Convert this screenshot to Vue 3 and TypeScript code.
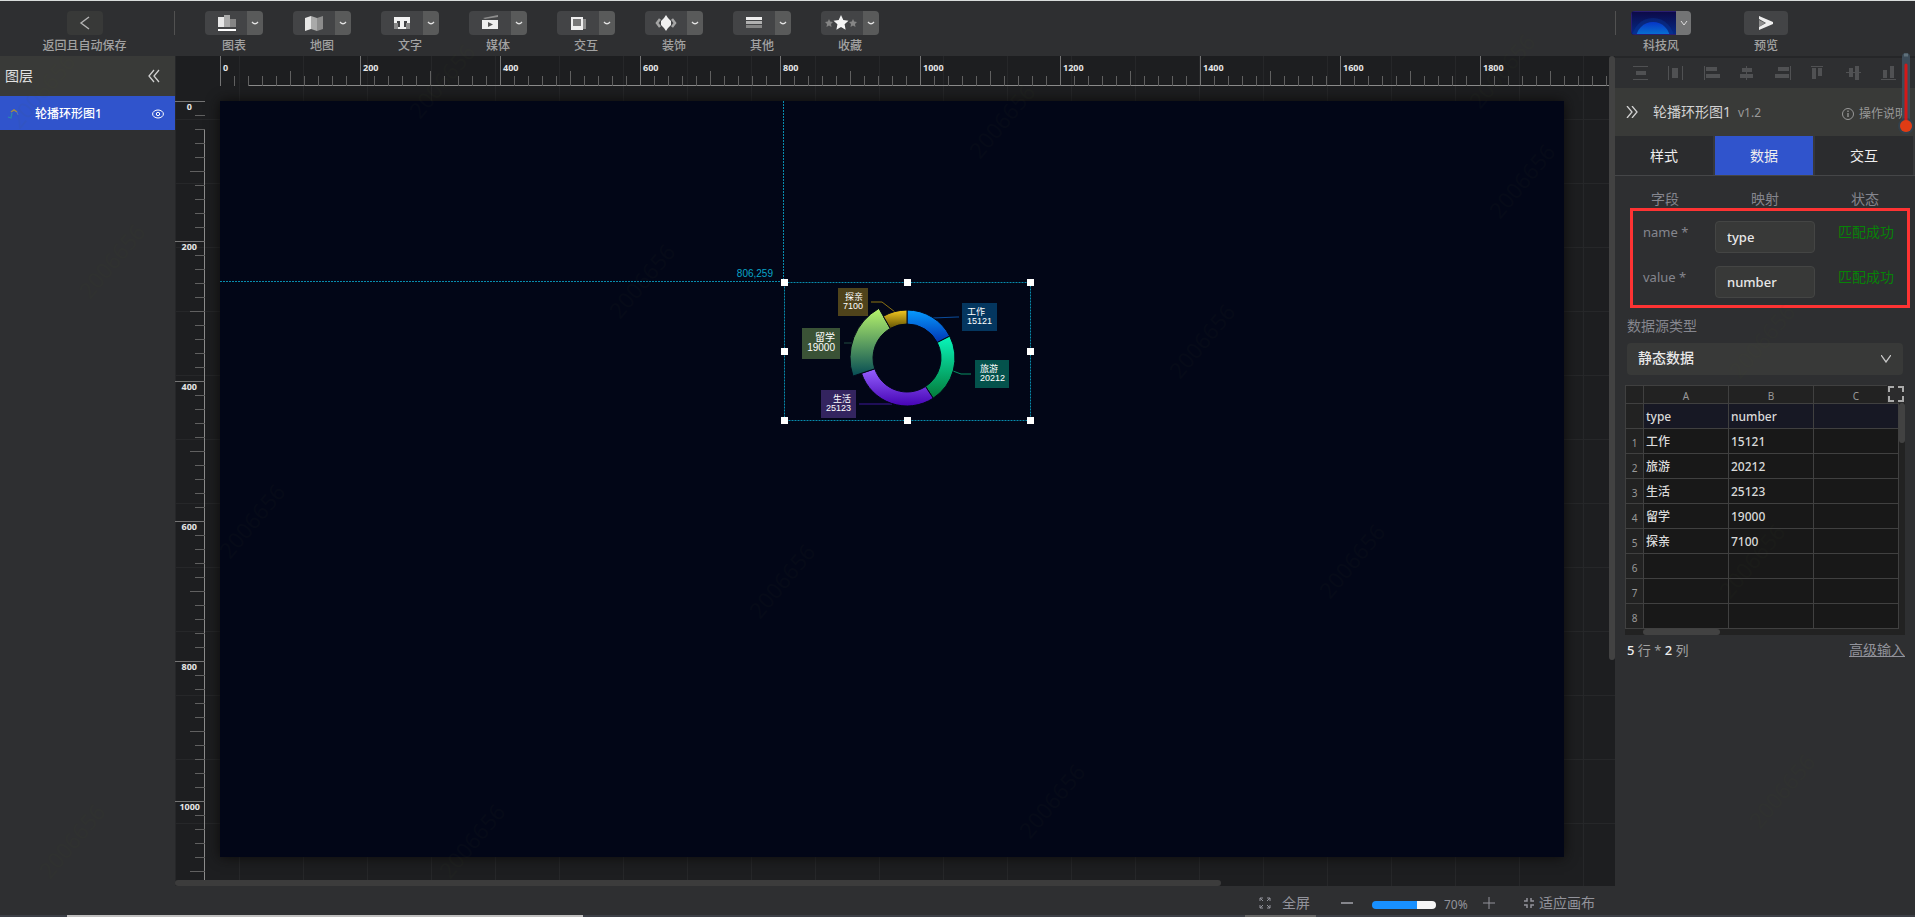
<script setup lang="ts">
import { ref } from 'vue'

interface Tick { pos: number; size: number; label: string }
interface Slice { name: string; value: number; path: string; fill: string; leader: string; stroke: string; box: number[]; bg: string; font: number; anchor: 'start' | 'end' }

const tools = ['图表', '地图', '文字', '媒体', '交互', '装饰', '其他', '收藏']

function buildTicks(count: number, full: number): Tick[] {
  return Array.from({ length: count }, (_, i) => ({
    pos: 45 + i * 14,
    size: i % 10 === 0 ? full : i % 5 === 0 ? 15 : 10,
    label: i % 10 === 0 ? String(i * 20) : '',
  }))
}
const hTicks = buildTicks(100, 30)
const vTicks = buildTicks(56, 30)

const cx = 687
const cy = 257
function point(r: number, deg: number): string {
  const a = ((deg - 90) * Math.PI) / 180
  return `${(cx + r * Math.cos(a)).toFixed(2)} ${(cy + r * Math.sin(a)).toFixed(2)}`
}
function arc(from: number, to: number, outer: number): string {
  const inner = 34
  return `M${point(outer, from)}A${outer} ${outer} 0 0 1 ${point(outer, to)}L${point(inner, to)}A${inner} ${inner} 0 0 0 ${point(inner, from)}Z`
}

const raw = [
  { name: '工作', value: 15121, fill: 'gBlue', leader: 'M713 217L737 216H739', stroke: '#0b4c9c', box: [742, 202, 35, 28], bg: '#04365f', font: 9, anchor: 'start' },
  { name: '旅游', value: 20212, fill: 'gGreen', leader: 'M733 270L741 273H751', stroke: '#088f62', box: [755, 259, 34, 28], bg: '#04524c', font: 9, anchor: 'start' },
  { name: '生活', value: 25123, fill: 'gPurple', leader: 'M639 303H672', stroke: '#3c169a', box: [601, 289, 35, 28], bg: '#33245f', font: 9, anchor: 'end' },
  { name: '留学', value: 19000, fill: 'gLime', leader: 'M624 242H634', stroke: '#204a40', box: [582, 227, 38, 31], bg: '#3a5236', font: 10, anchor: 'end' },
  { name: '探亲', value: 7100, fill: 'gYellow', leader: 'M651 201H662L675 211', stroke: '#8c7212', box: [618, 187, 30, 28], bg: '#4f431b', font: 9, anchor: 'end' },
] as const

const total = raw.reduce((s, d) => s + d.value, 0)
let angle = 0
const slices: Slice[] = raw.map((d) => {
  const from = angle
  angle += (d.value / total) * 360
  return { ...d, box: [...d.box], path: arc(from, angle, d.name === '留学' ? 57 : 48) }
})

const handles = [
  [564, 181], [687, 181], [810, 181], [564, 250], [810, 250], [564, 319], [687, 319], [810, 319],
]
const marks = [
  [20, 130], [420, 120], [980, 160], [1480, 110], [90, 300], [620, 320], [1180, 380], [1500, 220], [230, 560], [760, 620],
  [1330, 600], [1740, 380], [1730, 600], [50, 880], [450, 880], [1030, 840], [1760, 830],
]

const tabs = ['样式', '数据', '交互']
const activeTab = ref('数据')
const fields = ref([
  { key: 'name', map: 'type' },
  { key: 'value', map: 'number' },
])
const source = ref('静态数据')
const zoom = ref(70)
const sheet = Array.from({ length: 8 }, (_, i) => [raw[i]?.name ?? '', raw[i] ? String(raw[i].value) : '', ''])
</script>

<template>
  <div class="app">
    <header class="top">
      <div class="back">
        <button class="btn back-btn" aria-label="返回且自动保存">
          <svg width="12" height="16" viewBox="0 0 12 16"><path d="M10 2L2 8l8 6" fill="none" stroke="#b4b4b4" stroke-width="1.4" /></svg>
        </button>
        <span>返回且自动保存</span>
      </div>
      <nav class="tools">
        <div v-for="t in tools" :key="t" class="tool">
          <div class="split">
            <button class="main" :aria-label="t">
              <svg width="34" height="18" viewBox="0 0 34 18">
                <g v-if="t === '图表'"><path d="M9 3h6v10H9z" fill="#e8e8e8" /><path d="M15 1h6v12h-6z" fill="#a9a9a9" /><path d="M21 5h6v8h-6z" fill="#858585" /><path d="M9 15h18v2H9z" fill="#fff" /></g>
                <g v-else-if="t === '地图'"><path d="M8 4l6-2v13l-6 2z" fill="#e6e6e6" /><path d="M14 2l6 2v13l-6-2z" fill="#a9a9a9" /><path d="M20 4l6-2v13l-6 2z" fill="#8c8c8c" /></g>
                <g v-else-if="t === '文字'"><path d="M9 9h4v6H9zM21 9h4v6h-4z" fill="#8a8a8a" /><path d="M9 3h16v6h-3V7h-3v6h2v2h-8v-2h2V7h-3v2H9z" fill="#f2f2f2" /></g>
                <g v-else-if="t === '媒体'"><path d="M9 6h16v9H9z" fill="#eee" /><path d="M10 4l15-3v2L12 5z" fill="#8d8d8d" /><path d="M15 8v5l5-2.500z" fill="#555" /></g>
                <g v-else-if="t === '交互'"><path d="M22 5h3v10h-8v-2h5z" fill="#8c8c8c" /><path d="M10 3h12v13H10z" fill="#eee" /><path d="M12 5h8v7h-8z" fill="#777" /></g>
                <g v-else-if="t === '装饰'"><path d="M11 5L8 9l3 4M23 5l3 4-3 4" fill="none" stroke="#a5a5a5" stroke-width="2.500" /><path d="M17 1l2 3 3 3v4l-3 3-2 3-2-3-3-3V7l3-3z" fill="#f0f0f0" /></g>
                <g v-else-if="t === '其他'"><path d="M9 3h16v3H9z" fill="#eee" /><path d="M9 7h16v3H9z" fill="#b0b0b0" /><path d="M9 11h16v3H9z" fill="#858585" /></g>
                <g v-else><path d="M16 1l2.300 5 5.200.7-3.900 3.600 1 5.400-4.600-2.700-4.600 2.700 1-5.400-3.900-3.600 5.200-.7z" fill="#f4f4f4" /><path d="M4 5l1.200 2.600 2.800.4-2 2 .5 3L4 11.500 1.500 13 2 10 0 8l2.800-.4zM28 5l1.200 2.600 2.800.4-2 2 .5 3-2.500-1.500-2.500 1.500.5-3-2-2 2.800-.4z" fill="#858585" /></g>
              </svg>
            </button>
            <button class="more" :aria-label="t + ' 更多'">
              <svg width="8" height="5" viewBox="0 0 8 5"><path d="M1 1q3 3.500 6 0" fill="none" stroke="#e2e2e2" stroke-width="1.300" /></svg>
            </button>
          </div>
          <span>{{ t }}</span>
        </div>
      </nav>
      <div class="actions">
        <div class="tool theme">
          <div class="split">
            <button class="swatch" aria-label="科技风">
              <svg width="44" height="22" viewBox="0 0 44 22">
                <defs>
                  <linearGradient id="sky" x1="0" y1="0" x2="0" y2="1"><stop offset="0" stop-color="#0d0a48" /><stop offset="1" stop-color="#042a86" /></linearGradient>
                  <linearGradient id="dome" x1="0" y1="0" x2="0" y2="1"><stop offset="0" stop-color="#0636c8" /><stop offset=".4" stop-color="#0876d0" /></linearGradient>
                </defs>
                <path d="M0 0h44v22H0z" fill="url(#sky)" /><circle cx="21" cy="27" r="21" fill="#0840a8" opacity=".35" /><circle cx="21" cy="27" r="17" fill="url(#dome)" />
              </svg>
            </button>
            <button class="more light" aria-label="主题"><svg width="8" height="6" viewBox="0 0 8 6"><path d="M1 1l3 4 3-4" fill="none" stroke="#ddd" /></svg></button>
          </div>
          <span>科技风</span>
        </div>
        <div class="tool">
          <button class="btn play" aria-label="预览">
            <svg width="14" height="16" viewBox="0 0 14 16"><path d="M0 5l6 3-6 4z" fill="#8d8d8d" /><path d="M0 1l14 6v2L0 15v-3l7-4-7-4z" fill="#eee" /></svg>
          </button>
          <span>预览</span>
        </div>
      </div>
    </header>

    <aside class="layers">
      <div class="layers-head">
        <h2>图层</h2>
        <button class="plain" aria-label="收起图层">
          <svg width="12" height="14" viewBox="0 0 12 14"><path d="M6 1L1 7l5 6M11 1L6 7l5 6" fill="none" stroke="#d0d0d0" stroke-width="1.300" /></svg>
        </button>
      </div>
      <div class="layer">
        <svg width="14" height="12" viewBox="0 0 14 12"><path d="M4 4l3-2 3 2" fill="none" stroke="#a58f44" stroke-width="1.500" /><path d="M1 9l3 1 1-5" fill="none" stroke="#2b89b0" stroke-width="1.300" /><path d="M10 4l1 3" stroke="#5573c0" /></svg>
        <span>轮播环形图1</span>
        <button class="plain" aria-label="显示或隐藏">
          <svg width="12" height="10" viewBox="0 0 12 10"><ellipse cx="6" cy="5" rx="5.400" ry="4" fill="none" stroke="#fff" /><circle cx="6" cy="5" r="1.700" fill="none" stroke="#fff" /></svg>
        </button>
      </div>
    </aside>

    <main class="work">
      <svg class="ruler ruler-h">
        <path d="M73 29.500H3000" stroke="#8b8b8b" />
        <g v-for="t in hTicks" :key="t.pos">
          <path :d="`M${t.pos + 0.5} ${30 - t.size}V30`" :stroke="t.label ? '#757575' : '#606060'" />
          <text v-if="t.label" :x="t.pos + 3" y="15">{{ t.label }}</text>
        </g>
      </svg>
      <svg class="ruler ruler-v">
        <path d="M29.500 73V3000" stroke="#8b8b8b" />
        <g v-for="t in vTicks" :key="t.pos">
          <path :d="`M${30 - t.size} ${t.pos + 0.5}H30`" :stroke="t.label ? '#757575' : '#606060'" />
          <text v-if="t.label" :x="t.label.length > 3 ? 25 : t.label.length > 1 ? 22 : 17" :y="t.pos + 9" text-anchor="end">{{ t.label }}</text>
        </g>
      </svg>
      <div class="stage">
        <svg class="drawing">
          <defs>
            <linearGradient id="gBlue" x1="0" y1="0" x2="0" y2="1"><stop offset="0" stop-color="#079cff" /><stop offset="1" stop-color="#0034b4" /></linearGradient>
            <linearGradient id="gGreen" x1="0" y1="0" x2="0" y2="1"><stop offset="0" stop-color="#08f7bc" /><stop offset="1" stop-color="#047a39" /></linearGradient>
            <linearGradient id="gPurple" x1="0" y1="0" x2="0" y2="1"><stop offset="0" stop-color="#9560ff" /><stop offset="1" stop-color="#4604b4" /></linearGradient>
            <linearGradient id="gLime" x1="0" y1="0" x2="0" y2="1"><stop offset="0" stop-color="#b8f56c" /><stop offset="1" stop-color="#054b54" /></linearGradient>
            <linearGradient id="gYellow" x1="0" y1="0" x2="0" y2="1"><stop offset="0" stop-color="#f6ca20" /><stop offset="1" stop-color="#5f5004" /></linearGradient>
          </defs>
          <g fill="none" stroke="#078bad" stroke-dasharray="2 1">
            <path d="M563.500 0V181M0 180.500H564" />
            <rect x="564.500" y="181.500" width="246" height="138" />
          </g>
          <text x="553" y="176" text-anchor="end" font-size="10" fill="#09a4c8">806,259</text>
          <g v-for="s in slices" :key="s.name">
            <path :d="s.leader" fill="none" :stroke="s.stroke" />
            <path :d="s.path" :fill="`url(#${s.fill})`" stroke="#020617" />
            <rect :x="s.box[0]" :y="s.box[1]" :width="s.box[2]" :height="s.box[3]" :fill="s.bg" />
            <g fill="#fff" :font-size="s.font" :text-anchor="s.anchor">
              <text :x="s.anchor === 'start' ? s.box[0] + 5 : s.box[0] + s.box[2] - 5" :y="s.box[1] + s.font + 3">{{ s.name }}</text>
              <text :x="s.anchor === 'start' ? s.box[0] + 5 : s.box[0] + s.box[2] - 5" :y="s.box[1] + s.font * 2 + 3">{{ s.value }}</text>
            </g>
          </g>
          <rect v-for="h in handles" :key="h.join()" :x="h[0] - 3" :y="h[1] - 3" width="7" height="7" fill="#fff" />
        </svg>
      </div>
      <i class="bar-v"></i>
      <i class="bar-h"></i>
    </main>

    <footer class="status">
      <button class="plain full">
        <svg width="12" height="12" viewBox="0 0 12 12"><path d="M1 4V1h3M8 1h3v3M11 8v3H8M4 11H1V8M1 1l3 3M11 1L8 4M11 11L8 8M1 11l3-3" fill="none" stroke="#92939b" /></svg>
        全屏
      </button>
      <button class="plain minus" aria-label="缩小"><svg width="12" height="12"><path d="M0 6h12" stroke="#85868c" stroke-width="2" /></svg></button>
      <input v-model="zoom" class="zoom" type="range" min="0" max="100" aria-label="缩放" :style="{ '--fill': zoom + '%' }" />
      <output>{{ zoom }}%</output>
      <button class="plain plus" aria-label="放大"><svg width="12" height="12"><path d="M0 6h12M6 0v12" stroke="#92939b" /></svg></button>
      <button class="plain fit">
        <svg width="10" height="10" viewBox="0 0 10 10"><path d="M3 0v3H0M7 0v3h3M3 10V7H0M7 10V7h3" fill="none" stroke="#92939b" stroke-width="1.500" /></svg>
        适应画布
      </button>
    </footer>

    <aside class="panel">
      <div class="aligns">
        <button class="plain" aria-label="垂直分布"><svg width="16" height="14"><path d="M0 0h15v1H0zM3 5h10v4H3zM0 13h15v1H0z" /></svg></button>
        <button class="plain" aria-label="水平分布"><svg width="16" height="14"><path d="M0 0h1v14H0zM4 2h6v10H4zM14 0h1v14h-1z" /></svg></button>
        <button class="plain" aria-label="左对齐"><svg width="16" height="14"><path d="M0 0h1v14H0zM2 1h11v4H2zM2 8h14v4H2z" /></svg></button>
        <button class="plain" aria-label="水平居中"><svg width="16" height="14"><path d="M7 0h1v14H7zM3 2h10v4H3zM1 8h13v4H1z" /></svg></button>
        <button class="plain" aria-label="右对齐"><svg width="16" height="14"><path d="M15 0h1v14h-1zM3 1h11v4H3zM0 8h14v4H0z" /></svg></button>
        <button class="plain" aria-label="顶对齐"><svg width="16" height="14"><path d="M1 0h12v1H1zM2 2h4v11H2zM8 2h4v8H8z" /></svg></button>
        <button class="plain" aria-label="垂直居中"><svg width="16" height="14"><path d="M0 6h15v1H0zM3 2h4v9H3zM9 0h4v14H9z" /></svg></button>
        <button class="plain" aria-label="底对齐"><svg width="16" height="14"><path d="M0 13h15v1H0zM2 4h4v8H2zM9 0h4v12H9z" /></svg></button>
      </div>
      <div class="title">
        <button class="plain" aria-label="收起面板"><svg width="12" height="12" viewBox="0 0 12 12"><path d="M1 0l5 6-5 6M6 0l5 6-5 6" fill="none" stroke="#d0d0d0" stroke-width="1.300" /></svg></button>
        <h3>轮播环形图1</h3>
        <small>v1.2</small>
        <a href="#"><svg width="12" height="12" viewBox="0 0 12 12"><circle cx="6" cy="6" r="5.500" fill="none" stroke="#999" /><path d="M6 5v4M6 2.500v1.500" stroke="#999" stroke-width="1.300" /></svg>操作说明</a>
      </div>
      <div class="tabs" role="tablist">
        <button v-for="t in tabs" :key="t" role="tab" :aria-selected="t === activeTab" :class="{ on: t === activeTab }" @click="activeTab = t">{{ t }}</button>
      </div>
      <div class="cols"><span>字段</span><span>映射</span><span>状态</span></div>
      <div class="mapping">
        <div v-for="f in fields" :key="f.key" class="field">
          <label :for="'map-' + f.key">{{ f.key }} *</label>
          <input :id="'map-' + f.key" v-model="f.map" type="text" />
          <span>匹配成功</span>
        </div>
      </div>
      <label class="source-label" for="source">数据源类型</label>
      <div class="select">
        <select id="source" v-model="source"><option>静态数据</option></select>
        <svg width="10" height="8" viewBox="0 0 10 8"><path d="M0 0l5 7 5-7" fill="none" stroke="#c8c8c8" stroke-width="1.300" /></svg>
      </div>
      <div class="sheet">
        <table>
          <thead>
            <tr><th class="idx"></th><th>A</th><th>B</th><th>C</th></tr>
          </thead>
          <tbody>
            <tr class="names"><th class="idx"></th><td>type</td><td>number</td><td></td></tr>
            <tr v-for="(r, i) in sheet" :key="i"><th class="idx">{{ i + 1 }}</th><td v-for="(c, j) in r" :key="j">{{ c }}</td></tr>
          </tbody>
        </table>
        <i class="sheet-v"></i>
        <i class="sheet-h"></i>
        <button class="plain expand" aria-label="展开表格"><svg width="16" height="16" viewBox="0 0 16 16"><path d="M1 6V1h5M10 1h5v5M15 10v5h-5M6 15H1v-5" fill="none" stroke="#aaa" stroke-width="2" /></svg></button>
      </div>
      <div class="sheet-foot">
        <p><b>5</b> 行 * <b>2</b> 列</p>
        <a href="#">高级输入</a>
      </div>
    </aside>

    <svg class="gauge" width="16" height="84" viewBox="0 0 16 84">
      <path d="M8 5v68" stroke="#3d4c59" stroke-width="8" stroke-linecap="round" />
      <circle cx="8" cy="74" r="7" fill="#42515c" stroke="#33414c" stroke-width="2" />
      <path d="M6 3h4" stroke="#60717b" stroke-width="3" />
      <path d="M8 13v58" stroke="#d41818" stroke-width="3" stroke-linecap="round" />
      <circle cx="8" cy="74" r="6" fill="#e03c14" />
    </svg>
    <svg class="marks" aria-hidden="true">
      <text v-for="m in marks" :key="m.join()" :transform="`translate(${m[0]} ${m[1]}) rotate(-50)`">2006656</text>
    </svg>
    <div class="page-scroll"><i></i><i></i></div>
  </div>
</template>

<style>
body {
  margin: 0;
  background: #2e2f31;
}
</style>

<style scoped>
.app {
  position: relative;
  display: grid;
  grid-template: 56px minmax(0, 1fr) 31px / 175px minmax(0, 1fr) 300px;
  height: 100vh;
  overflow: hidden;
  background: #2e2f31;
  color: #a2a2a2;
  font: 12px/18px "Noto Sans", "Noto Sans CJK SC", sans-serif;
}
* { box-sizing: border-box; }
svg { display: block; flex: none; }
button { padding: 0; border: 0; color: inherit; font: inherit; cursor: pointer; }
.plain { display: flex; align-items: center; background: none; }

.top { grid-column: 1 / -1; display: flex; border-top: 1px solid #d8dcdb; padding-top: 10px; font-weight: 500; }
.back { position: relative; width: 175px; padding-right: 6px; display: flex; flex-direction: column; align-items: center; gap: 2px; }
.back::after { content: ""; position: absolute; right: 0; top: 0; width: 1px; height: 24px; background: #515151; }
.btn { display: grid; place-items: center; height: 24px; border-radius: 4px; background: #434446; }
.back-btn { width: 36px; background: #383938; }
.tools { display: flex; gap: 30px; padding-left: 30px; flex: 1; }
.tool { width: 58px; display: flex; flex-direction: column; align-items: center; gap: 2px; }
.split { display: flex; height: 24px; border-radius: 4px; overflow: hidden; }
.main { width: 42px; display: grid; place-items: center; background: #434446; }
.more { width: 16px; display: grid; place-items: center; background: #595a5a; }
.more.light { background: #737475; width: 15px; }
.actions { display: flex; width: 300px; padding-left: 16px; gap: 46px; position: relative; }
.actions::before { content: ""; position: absolute; left: 0; top: 0; width: 1px; height: 24px; background: #515151; }
.theme { width: 60px; }
.swatch { width: 45px; border: 1px solid #2a1d72; background: #0d0a48; }
.play { width: 44px; }

.layers-head { height: 40px; padding: 0 15px 0 5px; display: flex; align-items: center; justify-content: space-between; background: #393a38; }
h2 { margin: 0; color: #e2e2e2; font-size: 14px; font-weight: 400; }
.layer { height: 34px; padding: 1px 11px 0 7px; display: flex; align-items: center; gap: 14px; background: #3054cc; color: #fff; font-weight: 500; }
.layer span { flex: 1; }

.work {
  position: relative;
  overflow: hidden;
  background-color: #1d1e20;
  background-image: linear-gradient(to right, #262729 1px, transparent 1px), linear-gradient(#262729 1px, transparent 1px);
  background-size: 64px 64px;
  background-position: 0 -1px;
}
.stage { position: absolute; left: 45px; top: 45px; width: 1344px; height: 756px; background: #020617; box-shadow: 0 0 12px #0c0b0a; }
.drawing { width: 100%; height: 100%; font-family: "Liberation Sans", "Noto Sans CJK SC", sans-serif; }
.ruler { position: absolute; left: 0; top: 0; overflow: hidden; }
.ruler-h { width: 100%; height: 30px; }
.ruler-v { width: 30px; height: 100%; }
.ruler text { fill: #e6e6e6; font: bold 9px "Noto Sans", sans-serif; }
.bar-v { position: absolute; right: 0; top: 0; width: 6px; height: 604px; border-radius: 3px; background: #424242; }
.bar-h { position: absolute; left: 0; bottom: 0; width: 1046px; height: 6px; border-radius: 3px; background: #3c3c3c; }

.layers { grid-row: 2 / 4; }
.status { grid-column: 2; grid-row: 3; padding: 3px 20px 0 0; display: flex; align-items: center; justify-content: flex-end; color: #92939b; font-size: 14px; }
.full { gap: 11px; margin-right: 31px; }
.minus { margin-right: 19px; }
.zoom { appearance: none; width: 64px; height: 8px; margin: 3px 8px 0 0; border-radius: 4px; background: linear-gradient(to right, #1890ff var(--fill), #f5f5f5 var(--fill)); }
.zoom::-webkit-slider-thumb { appearance: none; width: 1px; height: 8px; background: transparent; }
output { width: 24px; margin-right: 15px; padding-top: 4px; font-size: 12px; }
.plus { margin-right: 29px; }
.fit { gap: 5px; }

.panel { grid-column: 3; grid-row: 2 / 4; min-width: 0; border-top: 2px solid #252628; }
.aligns { height: 30px; padding: 0 18px; display: flex; align-items: center; justify-content: space-between; }
.aligns svg { fill: #505153; }
.title { height: 48px; padding: 0 8px 0 11px; display: flex; align-items: center; background: #393a38; white-space: nowrap; }
h3 { margin: 0 7px 0 15px; color: #d2d2d2; font-size: 14px; font-weight: 400; }
small { flex: 1; padding-top: 2px; font-size: 12px; color: #999; }
.title a { display: flex; align-items: center; gap: 5px; padding-top: 3px; color: #999; text-decoration: none; font-size: 12px; }
.tabs { display: grid; grid-template-columns: repeat(3, 1fr); border-bottom: 1px solid #454648; height: 40px; }
.tabs button { background: #2b2c2e; color: #eee; font-size: 14px; border-right: 2px solid #37383a; }
.tabs .on { background: #3054cc; }
.cols { display: grid; grid-template-columns: repeat(3, 1fr); padding-top: 14px; height: 32px; text-align: center; font-size: 14px; color: #85868e; }
.mapping { height: 100px; margin: 0 5px 0 15px; padding: 10px 0 0 10px; border: 3px solid #fd3333; display: flex; flex-direction: column; gap: 13px; }
.field { display: grid; grid-template-columns: 72px 100px 1fr; font-size: 14px; color: #85868e; }
.field label { padding-top: 2px; font-size: 13px; }
.field input { width: 100%; height: 32px; padding: 0 11px; border: 1px solid #444544; border-radius: 4px; background: #383938; color: #e8e8e8; font: 500 13px/18px "Noto Sans", "Noto Sans CJK SC", sans-serif; }
.field span { padding: 2px 0 0 23px; color: #078207; white-space: nowrap; }
.source-label { display: block; margin: 9px 12px 8px; font-size: 14px; color: #85868e; }
.select { position: relative; margin: 0 12px 10px; }
.select select { appearance: none; display: block; width: 100%; height: 32px; padding: 0 11px 2px; border: 0; border-radius: 4px; background: #383938; color: #e8e8e8; font: 500 14px/18px "Noto Sans", "Noto Sans CJK SC", sans-serif; }
.select svg { position: absolute; right: 12px; top: 12px; pointer-events: none; }
.sheet { position: relative; margin: 0 10px; padding-bottom: 6px; background: #222; }
table { width: 274px; border-collapse: collapse; table-layout: fixed; background: #181818; }
th, td { height: 25px; padding: 2px 2px 0; border: 1px solid #404040; color: #dadada; font-size: 12px; line-height: 18px; text-align: left; font-weight: 500; }
thead th { height: 18px; line-height: 14px; }
th { background: #222; color: #999; font-size: 10px; font-weight: 400; text-align: center; }
.idx { width: 18px; padding: 3px 0 0; }
thead .idx { padding: 0; }
.names td { background: #171824; }
.sheet-v { position: absolute; right: 0; top: 18px; width: 6px; height: 40px; border-radius: 3px; background: #424242; }
.sheet-h { position: absolute; left: 18px; bottom: 0; width: 77px; height: 6px; border-radius: 3px; background: #424242; }
.expand { position: absolute; right: 0; top: 0; padding: 1px; background: #2c2c2d; }
.sheet-foot { margin: 0 10px 0 12px; padding-top: 6px; display: flex; justify-content: space-between; }
.sheet-foot p { margin: 0; font-size: 13px; }
.sheet-foot b { color: #eee; font-weight: 500; }
.sheet-foot a { color: #92939b; font-size: 14px; }

.gauge { position: absolute; right: 1px; top: 52px; }
.marks { position: absolute; inset: 0; width: 100%; height: 100%; pointer-events: none; font: 22px "Noto Sans", sans-serif; fill: #4c5a30; opacity: .05; }
.page-scroll { position: absolute; left: 0; right: 0; bottom: 0; height: 2px; background: #3c3f46; }
.page-scroll i { position: absolute; left: 67px; width: 516px; height: 2px; background: #c0bfbf; }
.page-scroll i + i { left: 1245px; width: 71px; background: #666; }
</style>
